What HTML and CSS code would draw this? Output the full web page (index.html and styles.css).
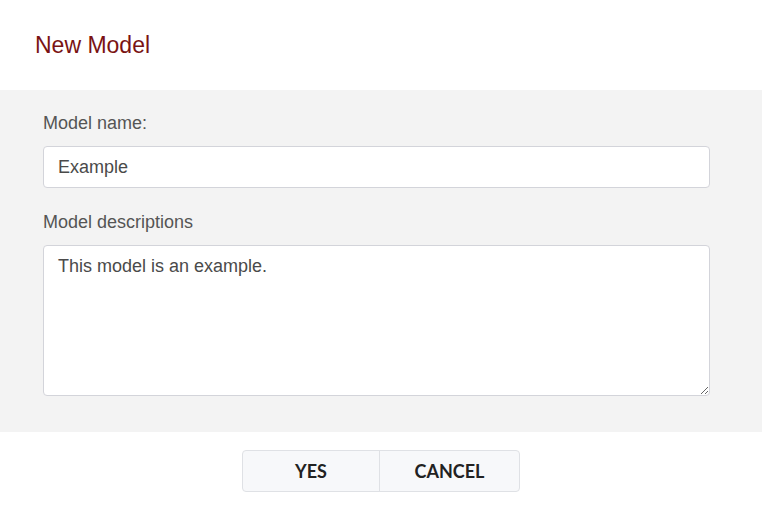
FILE: index.html
```html
<!DOCTYPE html>
<html>
<head>
<meta charset="utf-8">
<link rel="stylesheet" href="styles.css">
</head>
<body>
<div class="dialog">
  <div class="dialog-header">
    <h1 class="title">New Model</h1>
  </div>
  <div class="dialog-body">
    <label class="field-label" for="name">Model name:</label>
    <input class="text-input" id="name" type="text" value="Example">
    <label class="field-label second" for="desc">Model descriptions</label>
    <textarea class="text-area" id="desc">This model is an example.</textarea>
  </div>
  <div class="dialog-footer">
    <div class="btn-group">
      <button class="btn btn-yes">YES</button>
      <button class="btn btn-cancel">CANCEL</button>
    </div>
  </div>
</div>
</body>
</html>
```
FILE: styles.css
```css
html, body {
  margin: 0;
  padding: 0;
  background: #ffffff;
}
body {
  font-family: "Liberation Sans", Arial, sans-serif;
}
.dialog {
  width: 762px;
  height: 507px;
  display: flex;
  flex-direction: column;
}
.dialog-header {
  height: 90px;
  display: flex;
  align-items: center;
  padding-left: 35px;
  box-sizing: border-box;
}
.title {
  margin: 0;
  font-size: 23px;
  font-weight: normal;
  color: #7a1313;
  line-height: 28px;
  padding-bottom: 1px;
}
.dialog-body {
  background: #f3f3f3;
  padding: 22px 52px 36px 43px;
  display: flex;
  flex-direction: column;
}
.field-label {
  font-size: 18px;
  line-height: 22px;
  color: #555555;
  margin-bottom: 12px;
}
.field-label.second {
  margin-top: 23px;
}
.text-input,
.text-area {
  box-sizing: border-box;
  width: 100%;
  border: 1px solid #d3d4da;
  border-radius: 4px;
  background: #ffffff;
  font-family: "Liberation Sans", Arial, sans-serif;
  font-size: 18px;
  color: #4a4a4a;
  padding: 0 14px;
  margin: 0;
  outline: none;
}
.text-input {
  height: 42px;
}
.text-area {
  height: 151px;
  line-height: 24px;
  padding-top: 8px;
  resize: vertical;
}
.dialog-footer {
  flex: 1;
  display: flex;
  justify-content: center;
  padding-top: 18px;
  box-sizing: border-box;
}
.btn-group {
  display: flex;
  height: 42px;
  border: 1px solid #dfe1e5;
  border-radius: 4px;
  background: #f7f8fa;
  box-sizing: border-box;
  overflow: hidden;
}
.btn {
  border: none;
  background: transparent;
  font-family: Lato, "Open Sans", sans-serif;
  font-weight: bold;
  font-size: 18px;
  color: #222222;
  padding: 0;
  margin: 0;
  height: 100%;
}
.btn-yes {
  width: 137px;
  border-right: 1px solid #dfe1e5;
}
.btn-cancel {
  width: 139px;
}
```
